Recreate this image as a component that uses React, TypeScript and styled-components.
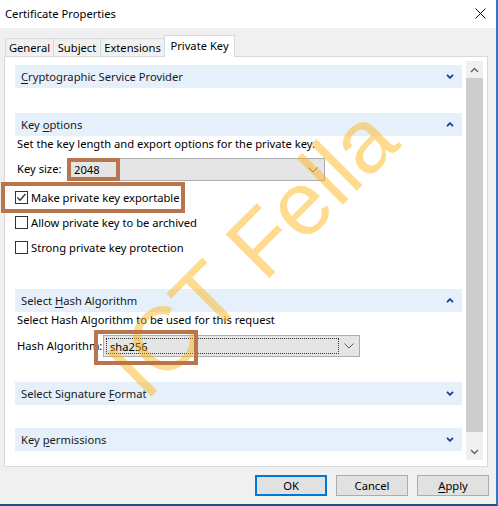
import React from 'react';
import styled, { createGlobalStyle } from 'styled-components';

const GlobalStyle = createGlobalStyle`
  html, body {
    margin: 0;
    padding: 0;
    background: #fff;
    overflow: hidden;
  }
  body {
    font-family: 'Noto Sans', 'Segoe UI', sans-serif;
    font-size: 11.2px;
    color: #000;
  }
  u {
    text-underline-offset: 2px;
  }
`;

const Window = styled.div`
  position: relative;
  width: 498px;
  height: 506px;
  box-sizing: border-box;
  border-right: 2px solid #2a78c8;
  border-bottom: 2px solid #1e4f8a;
  background: #f0f0f0;
  display: flex;
  flex-direction: column;
  overflow: hidden;
`;

const TitleBar = styled.div`
  height: 28px;
  flex-shrink: 0;
  background: #fff;
  display: flex;
  align-items: center;
  justify-content: space-between;
  padding: 0 10px 2px 5px;
  box-sizing: border-box;
  font-size: 11.2px;
`;

const TabStrip = styled.div`
  height: 28px;
  flex-shrink: 0;
  display: flex;
  align-items: flex-end;
  padding-left: 5px;
`;

const Tab = styled.div<{ $active?: boolean; $width: number }>`
  position: relative;
  z-index: ${p => (p.$active ? 2 : 1)};
  box-sizing: border-box;
  width: ${p => p.$width}px;
  height: ${p => (p.$active ? 22 : 18)}px;
  margin-bottom: ${p => (p.$active ? -1 : 0)}px;
  margin-left: -1px;
  padding-bottom: ${p => (p.$active ? 2 : 0)}px;
  border: 1px solid #d9d9d9;
  border-bottom: none;
  background: ${p => (p.$active ? '#fff' : '#f0f0f0')};
  display: flex;
  align-items: center;
  justify-content: center;

  &:first-child {
    margin-left: 0;
  }
`;

const Panel = styled.div`
  box-sizing: border-box;
  margin-left: 4px;
  width: 484px;
  height: 411px;
  flex-shrink: 0;
  border: 1px solid #d9d9d9;
  background: #fff;
  display: flex;
  gap: 4px;
  padding: 4px 4px 6px 10px;
`;

const Content = styled.div`
  flex: 1;
  padding-top: 4px;
  display: flex;
  flex-direction: column;
`;

const SectionHeader = styled.div`
  height: 23px;
  flex-shrink: 0;
  background: #e5f0fb;
  display: flex;
  align-items: center;
  justify-content: space-between;
  padding: 0 8px 1px 6px;
  box-sizing: border-box;
  color: #1a1a1a;
`;

const SectionBody = styled.div<{ $after: number }>`
  display: flex;
  flex-direction: column;
  padding-bottom: ${p => p.$after}px;
`;

const Description = styled.div`
  line-height: 15px;
  height: 15px;
  padding-left: 2px;
`;

const FieldRow = styled.div<{ $top: number; $height: number }>`
  display: flex;
  align-items: center;
  margin-top: ${p => p.$top}px;
  height: ${p => p.$height}px;
`;

const FieldLabel = styled.div<{ $width: number }>`
  width: ${p => p.$width}px;
  padding-left: 2px;
  box-sizing: border-box;
  flex-shrink: 0;
  padding-bottom: 2px;
  white-space: nowrap;
`;

const Combo = styled.div<{ $width: number }>`
  box-sizing: border-box;
  width: ${p => p.$width}px;
  height: 100%;
  background: #e5e5e5;
  border: 1px solid #adadad;
  display: flex;
  align-items: center;
  justify-content: space-between;
  padding: 0 6px 0 5px;
`;

const FocusCombo = styled(Combo)`
  padding: 2px 0 2px 2px;
`;

const FocusField = styled.div`
  flex: 1;
  height: 100%;
  box-sizing: border-box;
  border: 1px dotted #333;
  display: flex;
  align-items: center;
  padding-left: 3px;
`;

const ArrowZone = styled.div`
  width: 20px;
  display: flex;
  align-items: center;
  justify-content: center;
`;

const CheckList = styled.div`
  margin-top: 4px;
  display: flex;
  flex-direction: column;
`;

const CheckRow = styled.div`
  height: 25px;
  display: flex;
  align-items: center;
  gap: 3px;
`;

const CheckBox = styled.div`
  width: 13px;
  height: 13px;
  box-sizing: border-box;
  border: 1px solid #333;
  background: #fff;
  display: flex;
  align-items: center;
  justify-content: center;
`;

const ScrollBar = styled.div`
  width: 17px;
  flex-shrink: 0;
  background: #f0f0f0;
  display: flex;
  flex-direction: column;
`;

const ScrollArrow = styled.div`
  height: 17px;
  display: flex;
  align-items: center;
  justify-content: center;
`;

const Thumb = styled.div`
  height: 354px;
  background: #cdcdcd;
`;

const Track = styled.div`
  flex: 1;
`;

const ButtonRow = styled.div`
  display: flex;
  justify-content: flex-end;
  gap: 9px;
  margin-top: 8px;
  padding-right: 7px;
`;

const Button = styled.div<{ $default?: boolean }>`
  box-sizing: border-box;
  width: 72px;
  height: 21px;
  background: #e1e1e1;
  border: 1px solid ${p => (p.$default ? '#0078d7' : '#adadad')};
  box-shadow: ${p => (p.$default ? 'inset 0 0 0 1px #0078d7' : 'none')};
  display: flex;
  align-items: center;
  justify-content: center;
  padding-bottom: 1px;
`;

const Watermark = styled.div`
  position: absolute;
  left: 70px;
  top: 207px;
  z-index: 5;
  font-family: 'Liberation Sans', Arial, sans-serif;
  font-size: 90px;
  line-height: 90px;
  white-space: nowrap;
  color: rgba(255, 180, 20, 0.48);
  transform: rotate(-45deg);
  transform-origin: center center;
  pointer-events: none;
`;

const Highlight = styled.div<{ $x: number; $y: number; $w: number; $h: number }>`
  position: absolute;
  z-index: 6;
  left: ${p => p.$x}px;
  top: ${p => p.$y}px;
  width: ${p => p.$w}px;
  height: ${p => p.$h}px;
  box-sizing: border-box;
  border: 4px solid #b8764f;
`;

const Chevron: React.FC<{ up?: boolean }> = ({ up }) => (
  <svg width="8" height="5" viewBox="0 0 8 5">
    <polyline
      points={up ? '1,4.2 4,1.2 7,4.2' : '1,0.8 4,3.8 7,0.8'}
      fill="none"
      stroke="#1f3d8f"
      strokeWidth="1.8"
    />
  </svg>
);

const ComboArrow = () => (
  <svg width="10" height="6" viewBox="0 0 10 6">
    <polyline points="0.5,0.5 5,5 9.5,0.5" fill="none" stroke="#5a5a5a" strokeWidth="1" />
  </svg>
);

const ScrollChevron: React.FC<{ up?: boolean }> = ({ up }) => (
  <svg width="9" height="6" viewBox="0 0 9 6">
    <polyline
      points={up ? '1,5 4.5,1.5 8,5' : '1,1 4.5,4.5 8,1'}
      fill="none"
      stroke="#606060"
      strokeWidth="1.4"
    />
  </svg>
);

const CloseIcon = () => (
  <svg width="11" height="11" viewBox="0 0 11 11">
    <path d="M0.5 0.5 L10.5 10.5 M10.5 0.5 L0.5 10.5" stroke="#111" strokeWidth="1" />
  </svg>
);

const Check: React.FC<{ checked?: boolean; label: string }> = ({ checked, label }) => (
  <CheckRow>
    <CheckBox>
      {checked && (
        <svg width="11" height="11" viewBox="0 0 11 11">
          <polyline points="1.5,5.5 4,8.2 9.5,2" fill="none" stroke="#333" strokeWidth="1.3" />
        </svg>
      )}
    </CheckBox>
    <span>{label}</span>
  </CheckRow>
);

const App: React.FC = () => (
  <>
    <GlobalStyle />
    <Window>
      <TitleBar>
        <span>Certificate Properties</span>
        <CloseIcon />
      </TitleBar>
      <TabStrip>
        <Tab $width={49}>General</Tab>
        <Tab $width={48}>Subject</Tab>
        <Tab $width={65}>Extensions</Tab>
        <Tab $width={71} $active>
          Private Key
        </Tab>
      </TabStrip>
      <Panel>
        <Content>
          <SectionHeader>
            <span>
              <u>C</u>ryptographic Service Provider
            </span>
            <Chevron />
          </SectionHeader>
          <SectionBody $after={25} />

          <SectionHeader>
            <span>
              Key <u>o</u>ptions
            </span>
            <Chevron up />
          </SectionHeader>
          <SectionBody $after={29}>
            <Description>Set the key length and export options for the private key.</Description>
            <FieldRow $top={7} $height={23}>
              <FieldLabel $width={53}>Key size:</FieldLabel>
              <Combo $width={257}>
                <span>2048</span>
                <ComboArrow />
              </Combo>
            </FieldRow>
            <CheckList>
              <Check checked label="Make private key exportable" />
              <Check label="Allow private key to be archived" />
              <Check label="Strong private key protection" />
            </CheckList>
          </SectionBody>

          <SectionHeader>
            <span>
              Select <u>H</u>ash Algorithm
            </span>
            <Chevron up />
          </SectionHeader>
          <SectionBody $after={25}>
            <Description>Select Hash Algorithm to be used for this request</Description>
            <FieldRow $top={8} $height={22}>
              <FieldLabel $width={88}>Hash Algorithm:</FieldLabel>
              <FocusCombo $width={257}>
                <FocusField>sha256</FocusField>
                <ArrowZone>
                  <ComboArrow />
                </ArrowZone>
              </FocusCombo>
            </FieldRow>
          </SectionBody>

          <SectionHeader>
            <span>
              Select Signature <u>F</u>ormat
            </span>
            <Chevron />
          </SectionHeader>
          <SectionBody $after={23} />

          <SectionHeader>
            <span>
              Key <u>p</u>ermissions
            </span>
            <Chevron />
          </SectionHeader>
        </Content>
        <ScrollBar>
          <ScrollArrow>
            <ScrollChevron up />
          </ScrollArrow>
          <Thumb />
          <Track />
          <ScrollArrow>
            <ScrollChevron />
          </ScrollArrow>
        </ScrollBar>
      </Panel>
      <ButtonRow>
        <Button $default>OK</Button>
        <Button>Cancel</Button>
        <Button>
          <span>
            <u>A</u>pply
          </span>
        </Button>
      </ButtonRow>
      <Watermark>ICT Fella</Watermark>
      <Highlight $x={67} $y={158} $w={53} $h={23} />
      <Highlight $x={1} $y={182} $w={184} $h={31} />
      <Highlight $x={94} $y={330} $w={104} $h={35} />
    </Window>
  </>
);

export default App;
